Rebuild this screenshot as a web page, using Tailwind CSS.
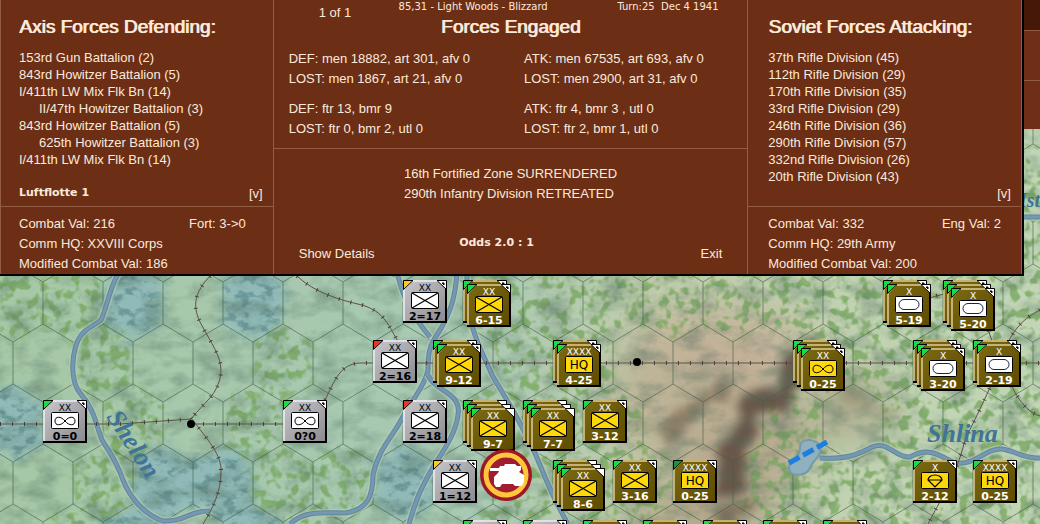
<!DOCTYPE html>
<html lang="en">
<head>
    <meta charset="UTF-8">
    <meta name="viewport" content="width=device-width, initial-scale=1.0">
    <script src="https://cdn.jsdelivr.net/npm/@tailwindcss/browser@4"></script>
    <title>Combat Report</title>
</head>
<body class="bg-[#a3c19b]">
<main class="relative h-screen overflow-hidden font-['Liberation_Sans',sans-serif] text-[13px] text-[#fbeadb]">

    <!-- Map -->
    <svg class="absolute inset-0 h-full w-full" role="img" aria-label="Campaign map">
        <defs>
            <pattern id="hexes" x="13" y="282" width="60" height="120" patternUnits="userSpaceOnUse">
                <path d="M30 0V42L0 60V102L30 120M30 42L60 60V102L30 120" fill="none" stroke="#3f5b45" stroke-opacity=".6"/>
            </pattern>
            <filter id="paper" x="0" y="0" width="100%" height="100%" color-interpolation-filters="sRGB">
                <feTurbulence type="fractalNoise" baseFrequency=".035 .06" numOctaves="4" seed="4"/>
                <feColorMatrix values="0 0 0 0 .3  0 0 0 0 .42  0 0 0 0 .36  1.6 0 0 0 -.65"/>
            </filter>
            <filter id="woods" x="0" y="0" width="100%" height="100%" color-interpolation-filters="sRGB">
                <feTurbulence type="fractalNoise" baseFrequency=".1" numOctaves="2" seed="8" result="n"/>
                <feColorMatrix in="n" values="0 0 0 0 .46  0 0 0 0 .65  0 0 0 0 .36  6 0 0 0 -2.9" result="c"/>
                <feGaussianBlur in="SourceAlpha" stdDeviation="5" result="b"/>
                <feComposite in="c" in2="b" operator="in"/>
            </filter>
            <filter id="swamp" x="0" y="0" width="100%" height="100%" color-interpolation-filters="sRGB">
                <feTurbulence type="fractalNoise" baseFrequency=".08 .12" numOctaves="3" seed="21" result="n"/>
                <feColorMatrix in="n" values="0 0 0 0 .42  0 0 0 0 .6  0 0 0 0 .6  5 0 0 0 -2.5" result="c"/>
                <feDisplacementMap in="SourceGraphic" in2="n" scale="30" xChannelSelector="R" yChannelSelector="G" result="d"/>
                <feGaussianBlur in="d" stdDeviation="4" result="b"/>
                <feComposite in="c" in2="b" operator="in" result="m"/>
                <feMerge><feMergeNode in="b"/><feMergeNode in="m"/></feMerge>
            </filter>
            <filter id="hills" x="-30%" y="-30%" width="160%" height="160%" color-interpolation-filters="sRGB">
                <feTurbulence type="fractalNoise" baseFrequency=".03" numOctaves="4" seed="3" result="n"/>
                <feDisplacementMap in="SourceGraphic" in2="n" scale="40" xChannelSelector="R" yChannelSelector="G" result="d"/>
                <feGaussianBlur in="d" stdDeviation="5"/>
            </filter>
            <filter id="soft" x="-50%" y="-50%" width="200%" height="200%"><feGaussianBlur stdDeviation="20"/></filter>
            <linearGradient id="land">
                <stop offset="0" stop-color="#a6c8a6"/>
                <stop offset=".45" stop-color="#a8c9b3"/>
                <stop offset=".62" stop-color="#bfceac"/>
                <stop offset="1" stop-color="#c1d6b6"/>
            </linearGradient>
            <linearGradient id="gray" x2="1" y2="1"><stop stop-color="#c9c9cd"/><stop offset="1" stop-color="#8b8b90"/></linearGradient>
            <linearGradient id="olive" x2="1" y2="1"><stop stop-color="#7d6a12"/><stop offset="1" stop-color="#5e4c00"/></linearGradient>
        </defs>

        <rect width="100%" height="100%" fill="url(#land)"/>
        <g filter="url(#soft)">
            <ellipse cx="720" cy="350" rx="95" ry="42" fill="#c4b199"/>
            <ellipse cx="735" cy="440" rx="75" ry="65" fill="#b9aa8f"/>
            <ellipse cx="655" cy="405" rx="45" ry="55" fill="#bdb396"/>
            <ellipse cx="700" cy="515" rx="80" ry="25" fill="#b0a184"/>
            <ellipse cx="850" cy="405" rx="40" ry="35" fill="#aba98a"/>
        </g>
        <g id="swampHexes" fill="#90bab8" filter="url(#swamp)"></g>
        <g id="woodHexes" filter="url(#woods)" opacity=".75"></g>
        <g filter="url(#hills)" fill="none" stroke-linecap="round">
            <path d="M806 360L758 408L736 448L728 483" stroke="#5f4e42" stroke-width="24" stroke-opacity=".9"/>
            <path d="M718 393L673 428" stroke="#7c6a54" stroke-width="20" stroke-opacity=".7"/>
            <path d="M748 508L728 524" stroke="#6b5648" stroke-width="16" stroke-opacity=".7"/>
            <path d="M850 400L890 415" stroke="#8a7f60" stroke-width="14" stroke-opacity=".5"/>
        </g>
        <rect width="100%" height="100%" filter="url(#paper)" opacity=".6"/>
        <rect width="100%" height="100%" fill="url(#hexes)"/>

        <!-- Rivers -->
        <g id="rivers" fill="none" stroke-linejoin="round"></g>
        <path d="M800 447C800 438 814 438 820 446C823 456 812 461 810 468C806 476 790 478 789 468C789 460 801 458 800 447Z" fill="#8fb0bd" stroke="#7599ad" stroke-width="2"/>
        <path d="M789 463L827 442" stroke="#1c7fe0" stroke-width="5" stroke-dasharray="12 4"/>

        <!-- Railways -->
        <g id="rails" fill="none"></g>
        <circle cx="191" cy="424" r="4" fill="#000"/>
        <circle cx="637" cy="362" r="4" fill="#000"/>

        <g class="font-['Liberation_Serif',serif] font-bold italic" fill="#3f7398">
            <text class="text-[26px]" transform="translate(106 417) rotate(57)">Shelon</text>
            <text class="text-[26px]" x="927" y="442">Shlina</text>
            <text class="text-[20px]" x="1019" y="207">Ist</text>
        </g>

        <g id="units"></g>

        <!-- Battle marker -->
        <g>
            <circle cx="506" cy="475" r="26" fill="#9c1828"/>
            <circle cx="506" cy="475" r="20" fill="#a01c2e" stroke="#ffc63c" stroke-width="5"/>
            <path d="M490 468H499L500 466H504L505 464H515L517 466H521V470L519 472L524 475V482L522 486H515L513 484H502L500 487H496L494 484V477L498 473L499 471H490Z" fill="#fff"/>
        </g>
    </svg>

    <!-- Corner of the side panel -->
    <div class="absolute top-0 right-0 w-[18px] bg-[#6f2f17]">
        <div class="h-[31px] border-b border-[#935c45] bg-[#451808]"></div>
        <div class="h-[50px] border-b border-[#935c45]"></div>
        <div class="h-12"></div>
    </div>

    <!-- Combat report -->
    <div class="relative mr-4 grid grid-cols-[273fr_475fr_275fr] border-r-2 border-b-2 border-black bg-[#6d2e16]">
        <section class="flex flex-col border-l border-[#935c45]">
            <div class="flex flex-1 flex-col pr-2.5 pl-[18px] pt-[15px]">
                <h2 class="text-[19px] leading-6 [text-shadow:1px_0_currentColor]">Axis Forces Defending:</h2>
                <ul class="mt-2.5 flex-1 leading-[17px]">
                    <li>153rd Gun Battalion (2)</li>
                    <li>843rd Howitzer Battalion (5)</li>
                    <li>I/411th LW Mix Flk Bn (14)</li>
                    <li class="pl-5">II/47th Howitzer Battalion (3)</li>
                    <li>843rd Howitzer Battalion (5)</li>
                    <li class="pl-5">625th Howitzer Battalion (3)</li>
                    <li>I/411th LW Mix Flk Bn (14)</li>
                </ul>
                <div class="flex justify-between leading-[18px]">
                    <p class="font-['DejaVu_Sans',sans-serif] text-[11px] leading-4 font-bold">Luftflotte 1</p>
                    <button type="button" aria-label="Expand Axis list">[v]</button>
                </div>
            </div>
            <div class="mt-[3px] border-t border-[#935c45] pt-[7px] pr-[27px] pl-[18px] leading-5">
                <p class="flex justify-between"><span>Combat Val: 216</span><span>Fort: 3-&gt;0</span></p>
                <p>Comm HQ: XXVIII Corps</p>
                <p>Modified Combat Val: 186</p>
            </div>
        </section>

        <section class="flex flex-col border-l border-[#935c45]">
            <div class="pb-[9px]">
                <div class="grid h-[15px] grid-cols-[125fr_219fr_130fr] font-['DejaVu_Sans',sans-serif] text-[10px] leading-[14px]">
                    <p class="pt-[3px] pl-[45px] font-['Liberation_Sans',sans-serif] text-[13px] leading-5">1 of 1</p>
                    <p>85,31 - Light Woods - Blizzard</p>
                    <p class="whitespace-pre">Turn:25  Dec 4 1941</p>
                </div>
                <h2 class="text-center text-[19px] leading-6 [text-shadow:1px_0_currentColor]">Forces Engaged</h2>
                <div class="mt-2.5 grid grid-cols-2 gap-x-3 gap-y-2.5 pl-[15px] leading-5">
                    <p>DEF: men 18882, art 301, afv 0<br>LOST: men 1867, art 21, afv 0</p>
                    <p>ATK: men 67535, art 693, afv 0<br>LOST: men 2900, art 31, afv 0</p>
                    <p>DEF: ftr 13, bmr 9<br>LOST: ftr 0, bmr 2, utl 0</p>
                    <p>ATK: ftr 4, bmr 3 , utl 0<br>LOST: ftr 2, bmr 1, utl 0</p>
                </div>
            </div>
            <div class="flex flex-1 flex-col border-t border-[#935c45] px-[25px] pt-[15px] leading-5">
                <div class="mx-auto flex-1">
                    <p>16th Fortified Zone SURRENDERED</p>
                    <p>290th Infantry Division RETREATED</p>
                </div>
                <div class="grid grid-cols-[1fr_auto_1fr] items-end pb-2.5">
                    <button type="button" class="justify-self-start">Show Details</button>
                    <p class="pr-7 pb-[11px] font-['DejaVu_Sans',sans-serif] text-[11px] font-bold">Odds 2.0 : 1</p>
                    <button type="button" class="justify-self-end">Exit</button>
                </div>
            </div>
        </section>

        <section class="flex flex-col border-x border-[#935c45]">
            <div class="flex flex-1 flex-col pr-2.5 pl-5 pt-[15px]">
                <h2 class="text-[19px] leading-6 [text-shadow:1px_0_currentColor]">Soviet Forces Attacking:</h2>
                <ul class="mt-2.5 flex-1 leading-[17px]">
                    <li>37th Rifle Division (45)</li>
                    <li>112th Rifle Division (29)</li>
                    <li>170th Rifle Division (35)</li>
                    <li>33rd Rifle Division (29)</li>
                    <li>246th Rifle Division (36)</li>
                    <li>290th Rifle Division (57)</li>
                    <li>332nd Rifle Division (26)</li>
                    <li>20th Rifle Division (43)</li>
                </ul>
                <div class="flex justify-end leading-[18px]">
                    <button type="button" aria-label="Expand Soviet list">[v]</button>
                </div>
            </div>
            <div class="mt-[3px] border-t border-[#935c45] pt-[7px] pr-5 pl-5 leading-5">
                <p class="flex justify-between"><span>Combat Val: 332</span><span>Eng Val: 2</span></p>
                <p>Comm HQ: 29th Army</p>
                <p>Modified Combat Val: 200</p>
            </div>
        </section>
    </div>
</main>

<script>
    // Hex centres, grouped by row
    const woods = {
        183: [1033], 243: [1033],
        303: [13, 73, 493, 553, 613, 673, 733, 793, 853, 913, 973, 1033],
        363: [103, 283, 523, 583, 823, 883, 943, 1003],
        423: [133, 253, 493, 553, 613, 793, 913, 973, 1033],
        483: [103, 283, 343, 523, 583, 643, 763, 823, 883, 943, 1003],
        543: [73, 313, 493, 553, 613, 793, 853, 913, 973, 1033]
    };
    const swamps = { 303: [133, 253], 423: [13], 483: [163, 223, 403], 543: [133, 253] };

    const rivers = [
        'M118 274C108 292 108 305 101 320C92 328 82 328 76 345C70 365 73 385 80 393C95 410 96 425 102 440C112 455 118 465 123 480C130 498 145 515 163 521C185 522 190 510 210 511',
        'M290 524C305 510 325 513 345 513C368 510 373 495 373 475C378 450 392 437 400 422C412 400 425 385 428 370C428 350 430 345 440 330C452 310 455 295 457 274',
        'M398 276C404 300 412 315 430 337M428 375C435 392 462 392 458 415C455 440 435 460 425 482C415 500 412 515 409 524',
        'M467 276C466 330 482 350 492 375C510 405 528 435 540 465C550 490 560 510 568 524',
        'M820 458C850 460 862 452 872 447C888 440 895 458 910 457C930 446 940 456 955 463C975 466 985 448 1002 449C1015 451 1025 459 1040 458',
        'M1020 217H1040'
    ];
    const rails = [
        'M210 276C195 292 192 305 200 322C212 345 221 355 221 372C219 395 203 403 192 418',
        'M0 424H120L191 419M191 424H290',
        'M191 418C208 440 222 455 221 472C221 492 212 510 203 524',
        'M297 276C315 293 340 300 362 305C385 312 388 325 400 345',
        'M325 400C335 380 340 364 360 363H1040',
        'M1040 310C1020 320 1008 335 1000 365C985 400 972 425 965 440C955 480 940 500 928 524',
        'M925 300C945 292 970 285 985 320L1000 365C1012 385 1020 410 1040 416'
    ];

    // x, y of the rear counter, stack size, side, size mark, symbol, strength, flag, plain corner
    const G = '#14e03c', Y = '#ffc81e', R = '#f0321e';
    const units = [
        [403, 280, 1, 'de', 'XX', 'inf', '2=17', Y],
        [463, 280, 2, 'su', 'XX', 'inf', '6-15', G],
        [883, 280, 2, 'su', 'X', 'tank', '5-19', G],
        [943, 280, 3, 'su', 'X', 'tank', '5-20', G],
        [373, 340, 1, 'de', 'XX', 'inf', '2=16', R],
        [433, 340, 2, 'su', 'XX', 'inf', '9-12', G],
        [553, 340, 2, 'su', 'XXXX', 'hq', '4-25', G],
        [793, 340, 3, 'su', 'XX', 'air', '0-25', G],
        [913, 340, 3, 'su', 'X', 'tank', '3-20', G],
        [973, 340, 2, 'su', 'X', 'tank', '2-19', G],
        [43, 400, 1, 'de', 'XX', 'air', '0=0', G],
        [283, 400, 1, 'de', 'XX', 'air', '0?0', G],
        [403, 400, 1, 'de', 'XX', 'inf', '2=18', R],
        [463, 400, 3, 'su', 'XX', 'inf', '9-7', G, true],
        [523, 400, 3, 'su', 'XX', 'inf', '7-7', G, true],
        [583, 400, 1, 'su', 'XX', 'inf', '3-12', G],
        [433, 460, 1, 'de', 'XX', 'inf', '1=12', Y],
        [553, 460, 3, 'su', 'XX', 'inf', '8-6', G, true],
        [613, 460, 1, 'su', 'XX', 'inf', '3-16', G],
        [673, 460, 1, 'su', 'XXXX', 'hq', '0-25', '#14963c'],
        [913, 460, 1, 'su', 'X', 'para', '2-12', G],
        [973, 460, 1, 'su', 'XXXX', 'hq', '0-25', G],
        [463, 520, 1, 'de', '', '', '', G],
        [523, 520, 1, 'de', '', '', '', G],
        [583, 520, 1, 'su', '', '', '', G],
        [643, 520, 1, 'su', '', '', '', G],
        [703, 520, 1, 'su', '', '', '', G],
        [763, 520, 1, 'su', '', '', '', G],
        [823, 520, 1, 'su', '', '', '', G]
    ];

    const symbols = {
        inf: '<path d="M9 13L35 28M35 13L9 28" stroke="#000" stroke-width="1.2"/>',
        tank: '<rect x="12" y="15.5" width="20" height="10" rx="5" fill="none" stroke="#1a2540"/>',
        air: '<path d="M22 21C18 16 12 16 12 21S18 26 22 21S32 16 32 21S26 26 22 21Z" fill="none" stroke="#000"/>',
        para: '<path d="M15 20A7 5 0 0 1 29 20L22 27ZM15 20H29" fill="none" stroke="#000" stroke-width="1.2"/>',
        hq: '<text class="text-[12px]" x="22" y="25" text-anchor="middle">HQ</text>'
    };

    function hexPath(rows) {
        return Object.entries(rows).map(([y, xs]) =>
            xs.map(x => `<path d="M${x} ${y - 39}l30 18v42l-30 18l-30 -18v-42z"/>`).join('')
        ).join('');
    }

    function frame(side, flag, plain) {
        const light = side === 'de' ? '#eeeef2' : '#e0cb98';
        return `
            <path d="M0 1H37L44 8V43H0Z" fill="#000"/>
            <path d="M0 8L8 0H35L42 8V41H0Z" fill="url(#${side === 'de' ? 'gray' : 'olive'})"/>
            <path d="M1 41V9L9 1H35" fill="none" stroke="${light}" stroke-width="1.5"/>
            <path d="M0.5 0.5H10L0.5 9.5Z" fill="${flag}" stroke="#000"/>
            <path d="M34 0.5H43.5V9.5Z" fill="#fff" stroke="#000"/>
            ${plain ? '' : '<path d="M39 3H41V5Z" fill="#000" stroke="#000"/>'}`;
    }

    function unit([x, y, count, side, mark, symbol, strength, flag, plain]) {
        let out = '';
        for (let i = 0; i < count; i++) {
            out += `<g transform="translate(${x + i * 4} ${y + i * 4})">${frame(side, flag, plain)}`;
            if (i === count - 1 && symbol) {
                const ink = side === 'de' ? '#000' : '#fff';
                const box = side === 'de' || symbol === 'tank' ? '#fff' : '#ffd80a';
                out += `
                    <text class="text-[9px]" x="22" y="11" text-anchor="middle" fill="${ink}">${mark}</text>
                    <rect x="8.5" y="12.5" width="27" height="16" rx="1" fill="${box}" stroke="#000"/>
                    ${symbols[symbol]}
                    <text class="text-[11px] font-bold" x="22" y="40" text-anchor="middle" fill="${ink}">${strength}</text>`;
            }
            out += '</g>';
        }
        return out;
    }

    document.getElementById('woodHexes').innerHTML = hexPath(woods);
    document.getElementById('swampHexes').innerHTML = hexPath(swamps);
    document.getElementById('rivers').innerHTML = rivers.map(d => `
        <path d="${d}" stroke="#b9cdb0" stroke-width="8" stroke-opacity=".6"/>
        <path d="${d}" stroke="#5f87a2" stroke-width="5"/>
        <path d="${d}" stroke="#7598b0" stroke-width="3"/>`).join('');
    document.getElementById('rails').innerHTML = rails.map(d => `
        <path d="${d}" stroke="#5e5148"/>
        <path d="${d}" stroke="#4a4038" stroke-width="4" stroke-dasharray="1 11"/>`).join('');
    const unitLayer = document.getElementById('units');
    unitLayer.setAttribute('class', "font-['DejaVu_Sans',sans-serif]");
    unitLayer.innerHTML = units.map(unit).join('');
</script>
</body>
</html>
